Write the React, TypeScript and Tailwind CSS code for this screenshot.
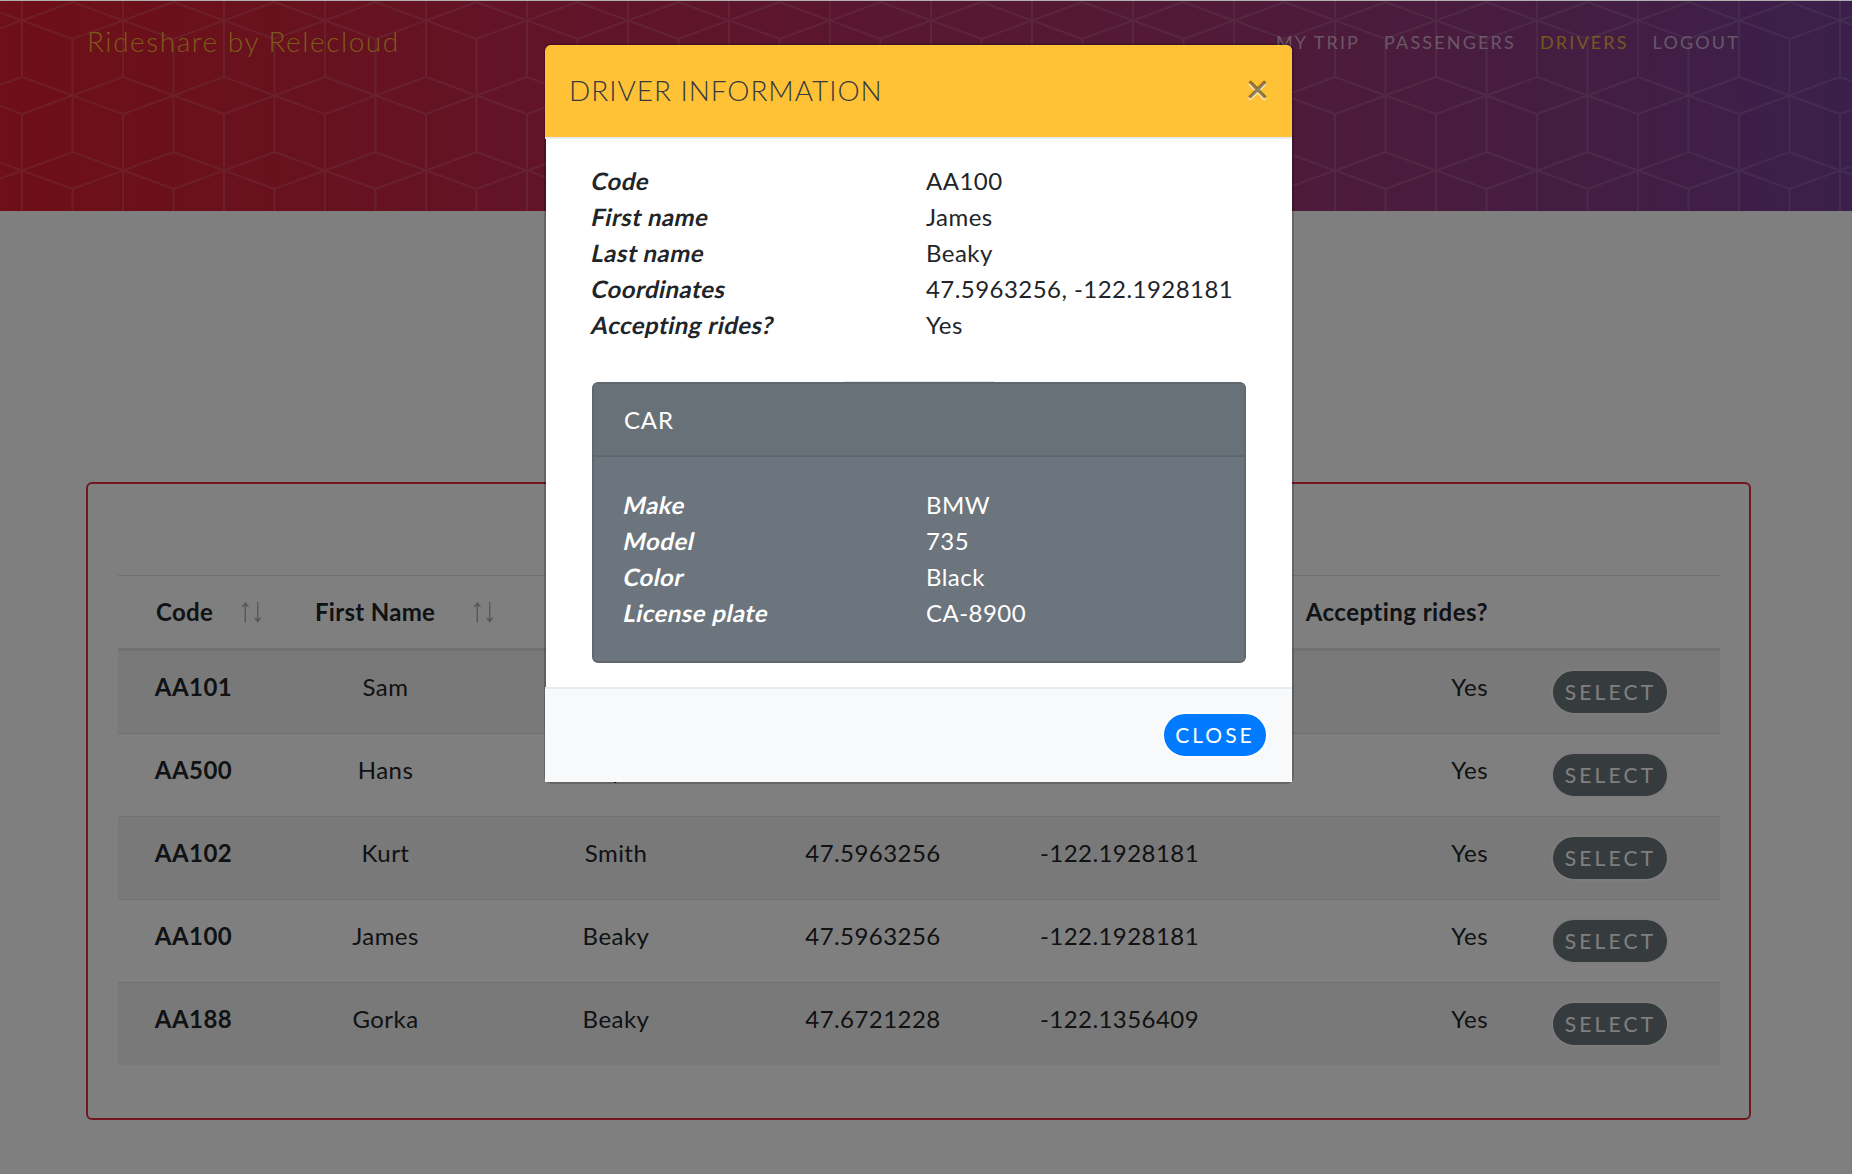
import type { ReactNode } from 'react';

type Driver = {
  code: string;
  first: string;
  last: string;
  lat: string;
  lng: string;
  accepting: string;
};

const drivers: Driver[] = [
  { code: 'AA101', first: 'Sam', last: 'Smith', lat: '47.6721228', lng: '-122.1356409', accepting: 'Yes' },
  { code: 'AA500', first: 'Hans', last: 'Meyers', lat: '47.5963256', lng: '-122.1928181', accepting: 'Yes' },
  { code: 'AA102', first: 'Kurt', last: 'Smith', lat: '47.5963256', lng: '-122.1928181', accepting: 'Yes' },
  { code: 'AA100', first: 'James', last: 'Beaky', lat: '47.5963256', lng: '-122.1928181', accepting: 'Yes' },
  { code: 'AA188', first: 'Gorka', last: 'Beaky', lat: '47.6721228', lng: '-122.1356409', accepting: 'Yes' },
];

const driverFields: [string, string][] = [
  ['Code', 'AA100'],
  ['First name', 'James'],
  ['Last name', 'Beaky'],
  ['Coordinates', '47.5963256, -122.1928181'],
  ['Accepting rides?', 'Yes'],
];

const carFields: [string, string][] = [
  ['Make', 'BMW'],
  ['Model', '735'],
  ['Color', 'Black'],
  ['License plate', 'CA-8900'],
];

const columns =
  'grid grid-cols-[151px_233px_228px_286px_207px_265px_1fr]';

function HexPattern() {
  return (
    <svg className="absolute inset-0 h-full w-full" aria-hidden="true">
      <defs>
        <pattern id="hex" width="101" height="150" x="22" y="2" patternUnits="userSpaceOnUse">
          <path
            d="M0 18.5 50.5 0 101 18.5 50.5 37Z M0 18.5V74.5 M101 18.5V74.5 M50.5 37V150 M50.5 93.5 0 75 M50.5 93.5 101 75 M50.5 93.5 0 112 M50.5 93.5 101 112 M0 112V150 M101 112V150 M0 0V18.5 M101 0V18.5"
            fill="none"
            stroke="#fff"
            strokeOpacity=".13"
            strokeWidth="2"
          />
        </pattern>
      </defs>
      <rect width="100%" height="100%" fill="url(#hex)" />
    </svg>
  );
}

function SortArrows() {
  return (
    <svg width="21" height="21" viewBox="0 0 21 21" className="opacity-30" aria-hidden="true">
      <path d="M4.3 1V20.5M16.7 0V19.5" stroke="#000" strokeWidth="1.4" />
      <path d="M4.3 0 8.6 5.2 4.3 3.8 0 5.2ZM16.7 20.5 12.4 15.3 16.7 16.7 21 15.3Z" fill="#000" />
    </svg>
  );
}

function Field({ label, value, split }: { label: string; value: string; split: string }) {
  return (
    <div className={`grid ${split}`}>
      <dt>
        <span className="inline-block -skew-x-[12deg] font-bold tracking-[0.45px]">{label}</span>
      </dt>
      <dd className="tracking-[0.45px]">{value}</dd>
    </div>
  );
}

function NavItem({ children, active }: { children: ReactNode; active?: boolean }) {
  return (
    <a className={active ? 'text-[#ffc733]/85' : 'text-white/60'}>{children}</a>
  );
}

function Header() {
  return (
    <header className="relative h-[211px] bg-[linear-gradient(90deg,#de1e2e_0%,#d0243c_16%,#c22853_32%,#a23470_66%,#8a3a84_84%,#763f98_100%)]">
      <HexPattern />
      <div className="relative flex h-[84px] items-center justify-between pl-[87px] pr-[112px]">
        <span className="pb-[2px] text-[28px] font-light tracking-[1.55px] text-[#ffc733]/90">
          Rideshare by Relecloud
        </span>
        <nav className="flex gap-[24px] text-[18px] tracking-[2.15px]">
          <NavItem>MY TRIP</NavItem>
          <NavItem>PASSENGERS</NavItem>
          <NavItem active>DRIVERS</NavItem>
          <NavItem>LOGOUT</NavItem>
        </nav>
      </div>
    </header>
  );
}

function DriversTable() {
  return (
    <div className="ml-[86px] mr-[101px] mt-[271px] h-[638px] rounded-md border-2 border-[#e02e42] pl-[30px] pr-[29px] pt-[91px]">
      <div className={`${columns} h-[76px] items-center border-b-[3px] border-t border-b-[#dee2e6] border-t-[#dee2e6] font-bold tracking-[0.3px]`}>
        <div className="flex items-center justify-between pl-[38px] pr-[7px]">
          Code
          <SortArrows />
        </div>
        <div className="flex items-center justify-between pl-[46px] pr-[8px]">
          First Name
          <SortArrows />
        </div>
        <div className="text-center">Last Name</div>
        <div className="text-center">Latitude</div>
        <div className="text-center">Longitude</div>
        <div className="text-right tracking-[0.45px]">Accepting rides?</div>
      </div>
      {drivers.map((d) => (
        <div
          key={d.code}
          className={`${columns} h-[83px] border-t border-[#dee2e6] pt-[18px] text-center tracking-[0.45px] odd:bg-white even:bg-black/5 nth-2:h-[82px] nth-2:border-t-0`}
        >
          <div className="font-bold">{d.code}</div>
          <div>{d.first}</div>
          <div>{d.last}</div>
          <div>{d.lat}</div>
          <div>{d.lng}</div>
          <div className="text-right">{d.accepting}</div>
          <div className="pl-[63px]">
            <button className="flex h-[46px] w-[118px] items-center justify-center rounded-full border-2 border-[#fafafa] bg-[#6c787c] pl-px text-[21px] tracking-[3.2px] text-white">
              SELECT
            </button>
          </div>
        </div>
      ))}
    </div>
  );
}

function DriverModal() {
  return (
    <div className="mt-[45px] w-[746px] rounded-md bg-white shadow-[0_0_0_2px_rgba(0,0,0,.2)]">
      <div className="-ml-px flex h-[94px] items-center justify-between rounded-t-md border-b-2 border-[#e9ecef] bg-[#ffc135] pl-[24px] pr-[23px] text-[#343a40]">
        <h5 className="pb-[3px] text-[28px] font-light leading-none tracking-[0.95px]">DRIVER INFORMATION</h5>
        <button className="pb-[7px] text-[40px] font-semibold leading-none text-black/45 [text-shadow:0_1.5px_0_#fff9]">×</button>
      </div>

      <div className="px-[46px] py-6">
        <dl>
          {driverFields.map(([label, value]) => (
            <Field key={label} label={label} value={value} split="grid-cols-[334px_1fr]" />
          ))}
        </dl>
        <div className="mx-auto mt-[38px] h-px w-[150px] bg-[#dfe1e3]" />
        <div className="rounded-md border-2 border-[#60686e] bg-[#6c757d] text-white">
          <div className="border-b-2 border-[#60686e] bg-[#697178] px-[30px] pb-[17px] pt-[18px] tracking-[0.8px]">
            CAR
          </div>
          <dl className="px-[30px] py-[30px]">
            {carFields.map(([label, value]) => (
              <Field key={label} label={label} value={value} split="grid-cols-[302px_1fr]" />
            ))}
          </dl>
        </div>
      </div>

      <div className="-ml-px flex h-[95px] items-center justify-end border-t-2 border-[#e9ecef] bg-[#f8f9fa] pb-[2px] pr-[24px]">
        <button className="flex h-[46px] w-[106px] items-center justify-center rounded-full border-2 border-white bg-[#007bff] pt-px text-[21px] tracking-[3px] text-white">
          CLOSE
        </button>
      </div>
    </div>
  );
}

export default function App() {
  return (
    <div className="relative h-[1174px] w-[1852px] overflow-hidden bg-white font-['Lato',sans-serif] text-[24px] leading-[36px] text-[#212529]">
      <Header />
      <DriversTable />
      <div className="absolute inset-0 border-t border-[#b0b0b0] bg-black/50" />
      <div className="absolute inset-0 flex items-start justify-center pr-[14px]">
        <DriverModal />
      </div>
    </div>
  );
}
